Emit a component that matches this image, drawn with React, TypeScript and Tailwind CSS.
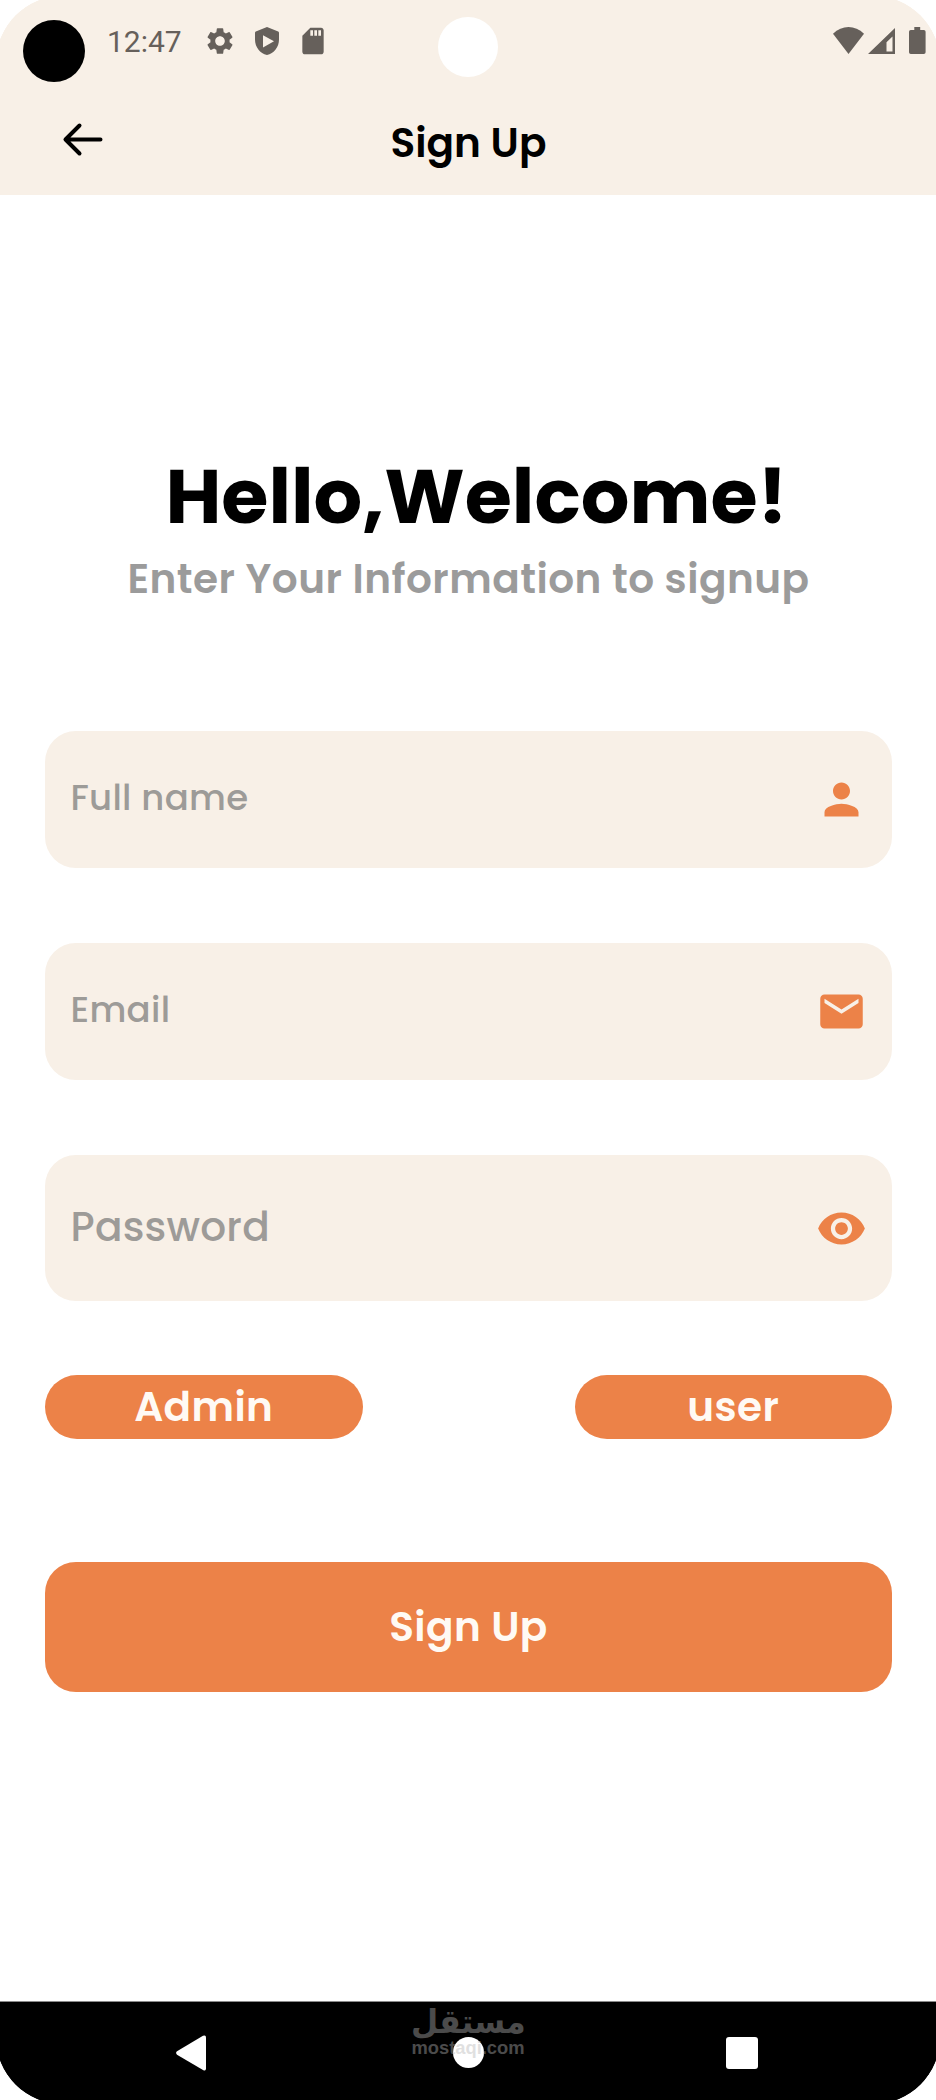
import type { ReactNode } from "react";
import { MdEmail, MdPerson, MdSdCard, MdSettings, MdVisibility } from "react-icons/md";

function StatusBar() {
  return (
    <div className="flex h-[84px] items-start text-[#66605b]">
      <div className="mt-5 ml-[22.5px] h-[62px] w-[62px] shrink-0 rounded-full bg-black" />
      <span className="mt-[26px] ml-[22.5px] w-[78px] font-['Roboto',sans-serif] text-[30px] leading-[32px]">
        12:47
      </span>
      <MdSettings className="mt-[25px] ml-[19px] h-8 w-8 shrink-0" />
      <svg className="mt-[27px] ml-[18.5px] h-7 w-6 shrink-0" viewBox="0 0 24 28" fill="currentColor">
        <path
          fillRule="evenodd"
          d="M12 0 23.2 4.6Q24 5 24 6V12.500C24 20 19 26.500 12 28 5 26.500 0 20 0 12.500V6Q0 5 .8 4.600ZM8 8.200V20.500L19 14.300Z"
        />
      </svg>
      <MdSdCard className="mt-[25px] ml-[18.5px] h-8 w-8 shrink-0" />
      <div className="mt-[17px] ml-[109px] h-[60px] w-[60px] shrink-0 rounded-full bg-white" />
      <svg className="mt-[27px] ml-[335px] h-[27px] w-[31px] shrink-0" viewBox="0 0 31 27" fill="currentColor">
        <path d="M0 6.800C9-2.200 22-2.200 31 6.800L15.500 27Z" />
      </svg>
      <svg className="mt-7 ml-[3.500px] h-[26px] w-[27px] shrink-0" viewBox="0 0 27 26" fill="currentColor">
        <path fillRule="evenodd" d="M27 0V26H0ZM24.500 8.500 18.500 14.200V23.500H24.500Z" />
      </svg>
      <svg className="mt-[27px] ml-[14.500px] h-[27px] w-[17px] shrink-0" viewBox="0 0 17 27" fill="currentColor">
        <path d="M5.300 0H11.200V2.900H14.800Q16.600 2.900 16.600 4.700V25.200Q16.600 27 14.800 27H1.800Q0 27 0 25.200V4.700Q0 2.900 1.800 2.900H5.300Z" />
      </svg>
    </div>
  );
}

function Header() {
  return (
    <header className="h-[195px] bg-[#f8f0e7]">
      <StatusBar />
      <div className="grid h-[111px] grid-cols-[1fr_auto_1fr] items-start">
        <svg
          className="mt-[38px] ml-[62px] h-9 w-[42px]"
          viewBox="0 0 42 36"
          fill="none"
          stroke="#000"
          strokeWidth="4"
          strokeLinecap="round"
          strokeLinejoin="round"
        >
          <path d="M38.500 17.500H3.500M17.500 3.500 3.500 17.500 17.500 31.500" />
        </svg>
        <h1 className="mt-[39px] ml-px text-[40.6px] leading-[40px] font-semibold text-black">Sign Up</h1>
        <span />
      </div>
    </header>
  );
}

type FieldProps = { label: string; icon: ReactNode; box: string; text: string };

function Field({ label, icon, box, text }: FieldProps) {
  return (
    <div className={`flex items-center justify-between rounded-[31px] bg-[#f8f0e7] pr-[25px] pl-[25.5px] ${box}`}>
      <span className={`font-medium text-[#9d9b98] ${text}`}>{label}</span>
      <span className="text-[#ec8248]">{icon}</span>
    </div>
  );
}

function NavBar() {
  return (
    <nav className="relative flex h-[99px] items-start border-t border-[#8a8a8a] bg-black">
      <svg className="mt-[33px] ml-[176px] h-9 w-[30px] shrink-0" viewBox="0 0 30 36" fill="#fff">
        <path d="M1 16.300 27 .8Q30-.5 30 2.500V33.500Q30 36.500 27 35L1 19.700Q-.8 18 1 16.300Z" />
      </svg>
      <div className="mt-[35px] ml-[247px] h-[31px] w-[31px] shrink-0 rounded-full bg-white" />
      <div className="mt-[35px] ml-[242px] h-8 w-8 shrink-0 rounded-[3px] bg-white" />
      <div className="absolute inset-x-0 top-[3px] flex flex-col items-center gap-px text-[#b6b6b6] opacity-[0.41]">
        <span
          dir="rtl"
          className="scale-x-[0.95] font-['DejaVu_Sans',sans-serif] text-[33px] leading-[33px] font-bold"
        >
          مستقل
        </span>
        <span className="font-['Liberation_Sans',sans-serif] text-[18.35px] leading-[18px] font-bold">
          mostaqi.com
        </span>
      </div>
    </nav>
  );
}

export default function App() {
  return (
    <div className="h-[2100px] w-[936px] overflow-hidden bg-white font-['Poppins','Inter',sans-serif] whitespace-nowrap">
      <div className="-m-1 flex h-[2108px] w-[944px] flex-col overflow-hidden rounded-[67px]">
        <div className="bg-[#f8f0e7] px-1 pt-1">
          <Header />
        </div>
        <main className="flex flex-1 flex-col bg-white pr-12 pl-[49px]">
          <div className="mt-[262px] flex flex-col items-center">
            <h2 className="ml-[16px] text-[76.5px] leading-[80px] font-bold text-black">Hello,Welcome!</h2>
            <p className="mt-[21px] text-[40.6px] leading-[41px] font-semibold tracking-[0.47px] text-[#9b9b9b]">
              Enter Your Information to signup
            </p>
          </div>

          <form className="mt-[132px] flex flex-col">
            <Field
              label="Full name"
              box="h-[137px]"
              text="text-[35.5px] tracking-[0.3px] leading-[40px] -mt-1"
              icon={<MdPerson className="h-[51px] w-[51px]" />}
            />
            <Field
              label="Email"
              box="mt-[75px] h-[137px]"
              text="text-[35.5px] tracking-[0.3px] leading-[40px] -mt-1"
              icon={<MdEmail className="h-[51px] w-[51px]" />}
            />
            <Field
              label="Password"
              box="mt-[75px] h-[146px]"
              text="text-[40.6px] tracking-[0.25px] leading-[40px] -mt-[3px]"
              icon={<MdVisibility className="h-[51px] w-[51px]" />}
            />

            <div className="mt-[74px] flex justify-between text-[40.6px] leading-[40px] font-semibold tracking-[0.4px] text-[#fffaf4]">
              <button
                type="button"
                className="flex h-[63.500px] w-[317.500px] items-center justify-center rounded-full bg-[#ec8248]"
              >
                Admin
              </button>
              <button
                type="button"
                className="flex h-[63.500px] w-[317.500px] items-center justify-center rounded-full bg-[#ec8248]"
              >
                user
              </button>
            </div>

            <button
              type="button"
              className="mt-[123.500px] flex h-[130px] items-center justify-center rounded-[31px] bg-[#ec8248] text-[40.6px] leading-[40px] font-semibold tracking-[0.4px] text-[#fffaf4]"
            >
              Sign Up
            </button>
          </form>
        </main>
        <div className="bg-black px-1 pb-1">
          <NavBar />
        </div>
      </div>
    </div>
  );
}
